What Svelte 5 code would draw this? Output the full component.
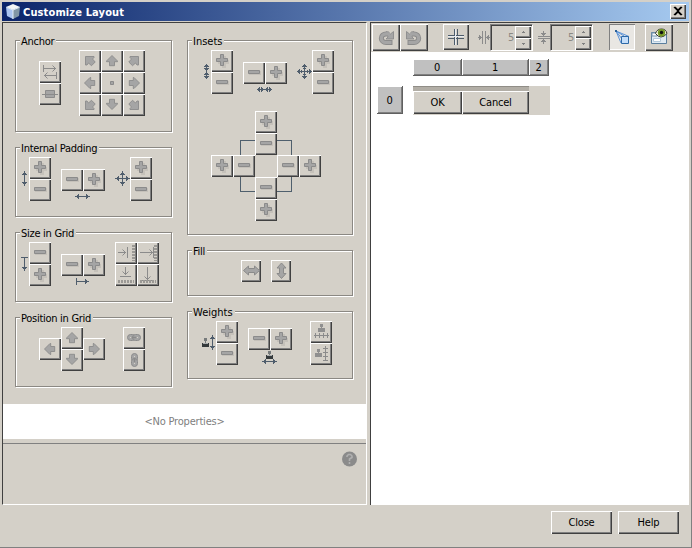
<script>
  const columns = ['0', '1', '2'];
</script>

{#snippet art(kind)}
  {#if kind === 'plus'}
    <path class="shade" d="M11 6h4v4h3v4h-3v4h-4v-4H7v-4h4z" />
    <path class="solid" d="M9.500 4.500h3v4h4v3h-4v4h-3v-4h-4v-3h4z" />
  {:else if kind === 'minus'}
    <path class="shade" d="M6 9h12v4H6z" />
    <path class="solid" d="M5.500 8.500h11v3h-11z" />
  {:else if kind === 'up' || kind === 'down' || kind === 'left' || kind === 'right'}
    <g transform={{ up: '', down: 'translate(0 -1) rotate(180 11 11)', left: 'rotate(-90 11 11)', right: 'rotate(90 11 11)' }[kind]}>
      <path class="solid soft" d="M11 5.500L16.500 11v.7H13.500v4h-5v-4H5.500V11z" />
    </g>
  {:else if kind === 'nw' || kind === 'ne' || kind === 'sw' || kind === 'se'}
    <g transform={{ nw: '', ne: 'translate(22 0) scale(-1 1)', sw: 'translate(0 22) scale(1 -1)', se: 'translate(22 22) scale(-1 -1)' }[kind]}>
      <path class="solid soft" d="M6.500 6.500h8.500v1l-1.500 1.500 2.700 3-3.700 3.700-3-2.700-1.500 2h-1.500z" />
    </g>
  {:else if kind === 'dot'}
    <path class="solid" d="M9.500 9.500h3v3h-3z" />
  {:else if kind === 'baseline'}
    <path class="line" d="M4.500 4v7M5 7.500h12M13.500 4.500l3 3-3 3M17.500 11v7M17 14.500H5M8.500 11.500l-3 3 3 3" />
  {:else if kind === 'middle'}
    <path class="solid" d="M6.500 7.500h9v7h-9z" /><path class="line" d="M3 11.500h16" />
  {:else if kind === 'grow-x'}
    <path class="line" d="M3 10.500h8M7.500 7.500l3 3-3 3M12.500 5v11" /><path class="hatch" d="M18.500 3v16" />
  {:else if kind === 'fill-x'}
    <path class="line" d="M3 10.500h13M12.500 7.500l3 3-3 3M16.500 5v11" /><path class="hatch" d="M18.500 3v16" />
  {:else if kind === 'grow-y'}
    <path class="line" d="M10.500 3v8M7.500 7.500l3 3 3-3M5 12.500h11" /><path class="hatch" d="M3 17.500h16" />
  {:else if kind === 'fill-y'}
    <path class="line" d="M10.500 3v13M7.500 12.500l3 3 3-3M5 16.500h11" /><path class="hatch" d="M3 17.500h16" />
  {:else if kind === 'chain-x' || kind === 'chain-y'}
    <g transform={kind === 'chain-y' ? 'rotate(90 11 11)' : ''}>
      <rect class="solid" x="4.500" y="7.500" width="8" height="6" rx="3" />
      <rect class="solid" x="9.500" y="7.500" width="8" height="6" rx="3" />
      <path class="light" d="M7 10.500h1.500M13.500 10.500H15" /><path class="thick" d="M8.500 10.500h5" />
    </g>
  {:else if kind === 'wide'}
    <path class="solid" d="M2.500 10.500l5-4.500v2.500h6V6l5 4.500-5 4.500v-2.500h-6V15z" />
  {:else if kind === 'tall'}
    <path class="solid" d="M10.500 3L15 8h-2.500v5.500H15l-4.500 5-4.500-5h2.500V8H6z" />
  {:else if kind === 'weight-x'}
    <path class="gray" d="M10 3h3v3h-1v1h3v4H8V7h3V6h-1z" /><path class="line" d="M4 14.500h15M5.500 12v5M9.500 12v5M13.500 12v5M17.500 12v5" />
  {:else if kind === 'weight-y'}
    <path class="gray" d="M7 6h3v3H9v1h3v4H5v-4h3V9H7z" /><path class="line" d="M15.500 3v15M13 5.500h5M13 9.500h5M13 13.500h5M13 17.500h5" />
  {/if}
{/snippet}

{#snippet btn(kind, area = '')}
  <button class="tool {area}" aria-label={kind}><svg width="22" height="22">{@render art(kind)}</svg></button>
{/snippet}

{#snippet pair(a, b)}
  {@render btn(a)}{@render btn(b)}
{/snippet}

{#snippet turn()}
  <path d="M20.500 17.500H14A4.700 4.300 0 0 1 14 8.900H17" fill="none" stroke="#8b8b8b" stroke-width="5" />
  <path d="M14.500 6.500L17 8l1.500 1 3-2.500V14H14l2-2z" fill="#a5a5a5" stroke="#8b8b8b" stroke-width=".9" />
  <path d="M19.500 17.500H14A4.700 4.300 0 0 1 14 8.900H18" fill="none" stroke="#a5a5a5" stroke-width="3.200" />
{/snippet}

<div class="window">
  <header>
    <svg class="logo" width="16" height="17">
      <path d="M8 1l7 3-7 3-7-3z" fill="#f3f6f5" /><path d="M1 4l7 3v9l-6-3z" fill="#aac5f1" /><path d="M8 7l7-3-1 9-6 3z" fill="#8197a6" />
      <path d="M8 7v9M1.500 4.300L8 7l6.500-2.700" fill="none" stroke="#e2edf4" />
    </svg>
    <h1>Customize Layout</h1>
    <button class="x" aria-label="close"><svg width="16" height="15"><path d="M4 3h2v1h1v1h2V4h1V3h2v1h-1v1h-1v1H9v2h1v1h1v1h1v1h-2v-1H9V9H7v1H6v1H4v-1h1V9h1V8h1V6H6V5H5V4H4z" stroke="#000" stroke-width=".4" /></svg></button>
  </header>

  <main>
    <section class="left">
      <div class="groups">
        <div class="col one">
          <div class="group anchor">
            <h2>Anchor</h2>
            <div class="stack low">{@render pair('baseline', 'middle')}</div>
            <div class="nine">
              {#each ['nw', 'up', 'ne', 'left', 'dot', 'right', 'sw', 'down', 'se'] as k}{@render btn(k)}{/each}
            </div>
          </div>
          <div class="group std">
            <h2>Internal Padding</h2>
            <svg class="vi" width="5" height="15"><path class="ink" d="M2.500 0v15M0 3.500h5M1 2.500h3M0 11.500h5M1 12.500h3" /></svg>
            <div class="stack">{@render pair('plus', 'minus')}</div>
            <div class="hcol">
              <div class="row">{@render pair('minus', 'plus')}</div>
              <svg class="hi" width="15" height="5"><path class="ink" d="M0 2.500h15M3.500 0v5M2.500 1v3M11.500 0v5M12.500 1v3" /></svg>
            </div>
            <svg class="four" width="15" height="15"><path class="ink" d="M0 7.500h15M7.500 0v15M3.500 5v5M2.500 6v3M11.500 5v5M12.500 6v3M5 3.500h5M6 2.500h3M5 11.500h5M6 12.500h3" /></svg>
            <div class="stack flush">{@render pair('plus', 'minus')}</div>
          </div>
          <div class="group std">
            <h2>Size in Grid</h2>
            <svg class="vs" width="7" height="14"><path class="ink" d="M0 .5h7M3.500 1v13M1 10.500h5M2 11.500h3" /></svg>
            <div class="stack near">{@render pair('minus', 'plus')}</div>
            <div class="hcol">
              <div class="row">{@render pair('minus', 'plus')}</div>
              <svg class="hs" width="13" height="7"><path class="ink" d="M.5 0v7M1 3.500h12M9.500 1v5M10.500 2v3" /></svg>
            </div>
            <div class="quad">{@render pair('grow-x', 'fill-x')}{@render pair('grow-y', 'fill-y')}</div>
          </div>
          <div class="group std">
            <h2>Position in Grid</h2>
            <div class="pad">
              {@render btn('up', 'n')}{@render btn('left', 'w')}{@render btn('right', 'e')}{@render btn('down', 's')}
            </div>
            <div class="stack far">{@render pair('chain-x', 'chain-y')}</div>
          </div>
        </div>

        <div class="col two">
          <div class="group insets">
            <h2 class="loose">Insets</h2>
            <div class="line1">
              <svg class="vi" width="5" height="15"><path class="ink" d="M2.500 0v15M0 2.500h5M1 1.500h3M0 4.500h5M1 5.500h3M0 10.500h5M1 9.500h3M0 12.500h5M1 13.500h3" /></svg>
              <div class="stack">{@render pair('plus', 'minus')}</div>
              <div class="hcol">
                <div class="row">{@render pair('minus', 'plus')}</div>
                <svg class="hi" width="15" height="5"><path class="ink" d="M0 2.500h15M2.500 0v5M1.500 1v3M5.500 1v3M4.500 0v5M9.500 1v3M10.500 0v5M12.500 0v5M13.500 1v3" /></svg>
              </div>
              <svg class="four" width="15" height="15"><path class="ink" d="M0 7.500h15M7.500 0v15M2.500 5v5M1.500 6v3M4.500 6v3M10.500 6v3M12.500 5v5M13.500 6v3M5 2.500h5M6 1.500h3M6 4.500h3M6 10.500h3M5 12.500h5M6 13.500h3" /></svg>
              <div class="stack flush">{@render pair('plus', 'minus')}</div>
            </div>
            <div class="cross">
              <div class="frame"></div>
              {@render btn('plus', 'c1')}{@render btn('minus', 'c2')}
              {@render btn('plus', 'c3')}{@render btn('minus', 'c4')}{@render btn('minus', 'c5')}{@render btn('plus', 'c6')}
              {@render btn('minus', 'c7')}{@render btn('plus', 'c8')}
            </div>
          </div>
          <div class="group fill">
            <h2>Fill</h2>
            {@render btn('wide', 'slim')}{@render btn('tall', 'slim')}
          </div>
          <div class="group weights">
            <h2 class="loose">Weights</h2>
            <svg class="wv" width="13" height="15">
              <path d="M2 3h3v3H2z" fill="#777b7c" /><path d="M3 6h1v2H3z" fill="#777b7c" /><path d="M0 8h7v4H0z" fill="#34393b" /><path d="M1 8h5v1H1z" fill="#a9acad" />
              <path class="ink" d="M10.500 0v15M8 3.500h5M9 2.500h3M8 11.500h5M9 12.500h3" />
            </svg>
            <div class="stack near">{@render pair('plus', 'minus')}</div>
            <div class="hcol">
              <div class="row">{@render pair('minus', 'plus')}</div>
              <svg class="wh" width="15" height="14">
                <path d="M6 1h3v3H6z" fill="#777b7c" /><path d="M7 4h1v1H7z" fill="#777b7c" /><path d="M4 5h7v4H4z" fill="#34393b" /><path d="M5 5h5v1H5z" fill="#a9acad" />
                <path class="ink" d="M0 11.500h15M3.500 9v5M2.500 10v3M11.500 9v5M12.500 10v3" />
              </svg>
            </div>
            <div class="stack far">{@render pair('weight-x', 'weight-y')}</div>
          </div>
        </div>
      </div>
      <div class="props">&lt;No Properties&gt;</div>
      <div class="desc">
        <svg width="15" height="16"><circle cx="7.500" cy="8" r="7.500" fill="#8b8b8b" /><path d="M5 6V5l1.500-1.500h2L10 5v1.500L7.500 8v2M7.500 11v2" fill="none" stroke="#b0b0b0" stroke-width="1.600" /></svg>
      </div>
    </section>

    <section class="right">
      <div class="bar">
        <button class="big" aria-label="redo"><svg width="28" height="26">{@render turn()}</svg></button>
        <button class="big" aria-label="undo"><svg width="28" height="26"><g transform="translate(28 0) scale(-1 1)">{@render turn()}</g></svg></button>
        <button class="big grid" aria-label="grid"><svg width="26" height="26"><path d="M5 11.500h16M5 14.500h16M11.500 5v16M14.500 5v16" fill="none" stroke="#4d5b6a" /><path d="M5 12.500h16M12.500 5v16" stroke="#e8ecf0" /></svg></button>
        <svg class="gap1" width="12" height="13"><path class="line" d="M4.500 0v13M7.500 0v13M0 6.500h4M8 6.500h4M1.500 4v5M2.500 5v3M10.500 4v5M9.500 5v3" /></svg>
        {@render spinner()}
        <svg class="gap2" width="12" height="13"><path class="line" d="M0 5.500h12M0 7.500h12M5.500 0v5M5.500 8v5M3 2.500h5M4 3.500h3M3 10.500h5M4 9.500h3" /></svg>
        {@render spinner()}
        <button class="toggle" aria-label="container">
          <svg width="26" height="26"><path d="M7 7l13 5.500M7 7l8 5M7 7l5 12M7 7l6 8" fill="none" stroke="#5b93d8" /><path d="M6 6h2v2H6z" fill="#2c6097" /><path d="M12.500 12.500h7v7h-7z" fill="#c4defa" stroke="#2e6aa8" /></svg>
        </button>
        <button class="big preview" aria-label="preview">
          <svg width="28" height="27"><path d="M6.500 8.500h15v11h-15z" fill="#dfeaf3" stroke="#5b7f9e" /><path d="M7 9h5v3H7z" fill="#f8fafc" stroke="#7898b0" /><path d="M8.500 14.500h7v3h-7z" fill="#fff" stroke="#b3c9da" /><path d="M10.500 9.500Q12 5 16.500 5T22 9.500Q19 13 16 13T10.500 9.500" fill="#f4f4e2" stroke="#35372a" /><circle cx="16.500" cy="8.800" r="3.700" fill="#759a25" /><circle cx="16.500" cy="8.500" r="1.700" fill="#111" /></svg>
        </button>
      </div>
      <div class="canvas">
        <div class="heads">
          {#each columns as c, i}<div class="head h{i}">{c}</div>{/each}
        </div>
        <div class="line2">
          <div class="head side">0</div>
          <div class="cells">
            <div class="cell ok"><span>OK</span></div>
            <div class="cell cancel"><span>Cancel</span></div>
          </div>
        </div>
      </div>
    </section>
  </main>

  <footer>
    <button class="push">Close</button>
    <button class="push">Help</button>
  </footer>
</div>

{#snippet spinner()}
  <div class="spin">
    <span>5</span>
    <div class="arrows">
      <i><svg width="5" height="3"><path d="M2 0h1v1h1v1H1V1h1z" /></svg></i>
      <i><svg width="5" height="3"><path d="M1 0h3v1H3v1H2V1H1z" /></svg></i>
    </div>
  </div>
{/snippet}

<style>
  :global(body) { background: #d4d0c8; overflow: hidden; }
  .window, .window * { box-sizing: border-box; }
  .window {
    width: 692px; height: 548px; padding: 2px 2px 0;
    background: #d4d0c8; border-right: 1px solid #808080; border-bottom: 1px solid #808080;
    font: 11px/14px "DejaVu Sans Condensed", "DejaVu Sans", sans-serif; font-stretch: condensed; color: #000;
    letter-spacing: -.2px;
    display: flex; flex-direction: column;
  }
  svg { display: block; flex: none; }
  button { font: inherit; color: inherit; letter-spacing: inherit; padding: 0; border: 0; background: #d4d0c8; }
  header { height: 19px; width: 687px; display: flex; align-items: center; padding: 0 3px 0 3px; background: linear-gradient(90deg, #0a246a, #a6caf0); }
  h1 { margin: 0 auto 0 2px; padding-top: 1px; font-size: 11px; line-height: 19px; font-weight: 700; color: #fff; letter-spacing: .13px; white-space: nowrap; }
  .x { width: 16px; height: 15px; box-shadow: inset 1px 1px #fff, inset -1px -1px #404040, inset -2px -2px #808080; }

  main { display: flex; gap: 3px; margin-top: 1px; height: 483px; width: 687px; }
  .left { width: 365px; border: 1px solid #404040; border-right-color: #fff; border-bottom-color: #fff; display: flex; flex-direction: column; }
  .groups { height: 381px; padding: 17px 0 0 12px; display: flex; gap: 15px; }
  .col { display: flex; flex-direction: column; gap: 15px; }
  .one { width: 157px; }
  .two { width: 166px; }
  .group { position: relative; display: flex; align-items: flex-start; border: 1px solid #8b8883; box-shadow: inset 1px 1px #fff, 1px 1px #fff; flex: none; }
  .anchor { height: 92px; }
  .std { height: 70px; }
  .insets { height: 195px; flex-direction: column; }
  .fill { height: 46px; padding: 9px 0 0 53px; gap: 10px; }
  .weights { height: 68px; }
  h2 { position: absolute; left: 4px; top: -6px; margin: 0; padding: 0 2px 0 1px; font-size: 11px; font-weight: 400; line-height: 14px; letter-spacing: -.28px; background: #d4d0c8; white-space: nowrap; }
  h2.loose { letter-spacing: 0; }

  .tool { width: 22px; height: 22px; flex: none; box-shadow: inset 1px 1px #fff, inset -1px -1px #404040, inset -2px -2px #808080; overflow: hidden; display: block; }
  .slim { width: 20px; }
  .stack { margin: 9px 0 0 2px; width: 22px; }
  .stack.low { margin: 20px 0 0 23px; }
  .stack.near { margin-left: 1px; }
  .stack.flush { margin-left: 0; }
  .stack.far { margin-left: 18px; }
  .nine { margin: 9px 0 0 18px; display: grid; grid-template-columns: repeat(3, 22px); }
  .quad { margin: 9px 0 0 10px; display: grid; grid-template-columns: repeat(2, 22px); }
  .row { display: flex; }
  .hcol { margin: 21px 0 0 10px; width: 44px; }
  .weights .hcol { margin-top: 16px; }
  .vi { margin: 23px 0 0 6px; }
  .line1 { display: flex; align-items: flex-start; }
  .line1 .vi { margin-left: 16px; }
  .hi { margin: 3px 0 0 14px; }
  .vs { margin: 24px 0 0 5px; }
  .hs { margin: 2px 0 0 15px; }
  .four { margin: 23px 0 0 10px; }
  .wv { margin: 23px 0 0 14px; }
  .wh { margin: 0 0 0 14px; }
  .pad { margin: 9px 0 0 23px; display: grid; grid-template: repeat(4, 11px) / repeat(3, 22px); }
  .n { grid-area: 1 / 2 / 3 / 3; }
  .w { grid-area: 2 / 1 / 4 / 2; }
  .e { grid-area: 2 / 3 / 4 / 4; }
  .s { grid-area: 3 / 2 / 5 / 3; }
  .cross { margin: 17px 0 0 23px; display: grid; grid-template: repeat(5, 22px) / repeat(5, 22px); }
  .frame { grid-area: 1 / 1 / 6 / 6; place-self: center; width: 52px; height: 52px; border: 1px solid #4f5f6d; }
  .c1 { grid-area: 1 / 3; } .c2 { grid-area: 2 / 3; }
  .c3 { grid-area: 3 / 1; } .c4 { grid-area: 3 / 2; } .c5 { grid-area: 3 / 4; } .c6 { grid-area: 3 / 5; }
  .c7 { grid-area: 4 / 3; } .c8 { grid-area: 5 / 3; }

  .shade { fill: #c5c1ba; }
  .solid { fill: #a5a5a5; stroke: #8b8b8b; }
  .soft { stroke-width: .9; }
  .line { fill: none; stroke: #8b8b8b; }
  .thick { fill: none; stroke: #8b8b8b; stroke-width: 1.5; }
  .light { stroke: #d4d0c8; }
  .gray { fill: #8f8f8f; }
  .hatch { fill: none; stroke: #9b9995; stroke-width: 3; stroke-dasharray: 2 1; }
  .ink { fill: none; stroke: #4f5d6c; }

  .props { height: 35px; background: #fff; color: #808080; text-align: center; line-height: 35px; }
  .desc { flex: 1; margin-top: 4px; border-top: 1px solid #808080; display: flex; justify-content: flex-end; align-items: flex-start; padding: 7px 9px 0 0; }

  .right { width: 319px; border-left: 1px solid #404040; border-top: 1px solid #404040; background: #fff; }
  .bar { height: 29px; width: 317px; background: #d4d0c8; padding: 1px 0 0 1px; display: flex; align-items: flex-start; }
  .big { width: 28px; height: 27px; flex: none; box-shadow: inset 1px 1px #fff, inset -1px -1px #404040, inset -2px -2px #808080; }
  .grid { width: 26px; height: 26px; margin-left: 15px; }
  .gap1 { margin: 7px 0 0 9px; }
  .gap2 { margin: 7px 0 0 5px; }
  .spin { width: 43px; height: 27px; flex: none; border: 1px solid #808080; border-right-color: #fff; border-bottom-color: #fff; box-shadow: inset 1px 1px #404040; display: flex; justify-content: flex-end; }
  .spin span { color: #8b8883; line-height: 25px; margin-right: 1px; }
  .arrows { width: 16px; padding-top: 1px; margin-right: 1px; }
  .arrows i { display: flex; align-items: center; justify-content: center; height: 12px; box-shadow: inset 1px 1px #fff, inset -1px -1px #404040, inset -2px -2px #808080; }
  .arrows path { fill: #808080; }
  .toggle { width: 26px; height: 26px; margin-left: 16px; background: #e9e7e3; box-shadow: inset 1px 1px #808080, inset -1px -1px #fff; }
  .preview { margin-left: 10px; }

  .canvas { padding: 7px 0 0 6px; }
  .heads { display: flex; padding-left: 36px; }
  .head { height: 17px; background: #c0c0c0; border-right: 1px solid #606060; border-bottom: 1px solid #606060; box-shadow: inset 1px 1px #fff, inset -1px -1px #808080; text-align: center; line-height: 18px; }
  .h0 { width: 49px; } .h1 { width: 67px; } .h2 { width: 20px; }
  .line2 { display: flex; margin-top: 10px; }
  .side { width: 26px; height: 28px; line-height: 29px; margin-right: 10px; }
  .cells { width: 137px; height: 29px; background: #d4d0c8; display: flex; align-items: flex-start; }
  .cell { height: 28px; padding-top: 4px; background: #b2aea6; border-top: 1px solid #908d87; }
  .cell span { display: block; height: 23px; background: #d4d0c8; text-align: center; line-height: 23px; box-shadow: inset 1px 1px #fff, inset -1px -1px #404040, inset -2px -2px #808080; }
  .ok { width: 49px; } .cancel { width: 67px; }

  footer { display: flex; justify-content: flex-end; gap: 6px; padding: 6px 10px 0 0; }
  .push { width: 61px; height: 23px; box-shadow: inset 1px 1px #fff, inset -1px -1px #404040, inset -2px -2px #808080; }
</style>
